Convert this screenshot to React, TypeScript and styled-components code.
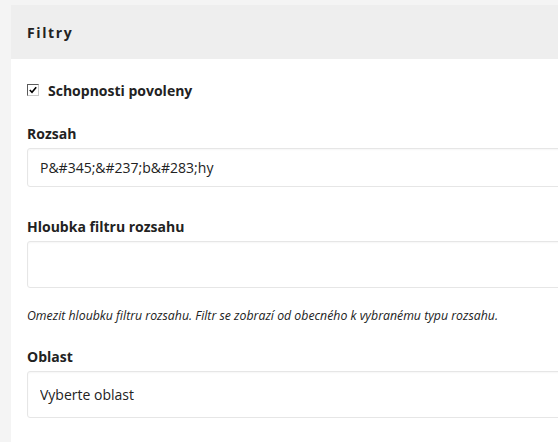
import React from 'react';
import styled, { createGlobalStyle } from 'styled-components';

const GlobalStyle = createGlobalStyle`
  html, body {
    margin: 0;
    padding: 0;
    background: #f4f4f4;
    font-family: 'Open Sans', 'Noto Sans', sans-serif;
    color: #222;
  }
`;

const Page = styled.div`
  width: 558px;
  height: 442px;
  overflow: hidden;
  padding: 5px 0 0 11px;
  box-sizing: border-box;
`;

const Panel = styled.section`
  width: 600px;
  min-height: 460px;
  background: #fff;
`;

const PanelHeader = styled.header`
  height: 54px;
  background: #eeeeee;
  display: flex;
  align-items: center;
  padding: 0 16px;

  h2 {
    margin: 0;
    font-size: 14px;
    font-weight: 700;
    letter-spacing: 1.6px;
    color: #222;
  }
`;

const PanelBody = styled.div`
  padding: 21px 16px 0;
  display: flex;
  flex-direction: column;
`;

const CheckRow = styled.label`
  display: flex;
  align-items: center;
  gap: 9px;
  height: 20px;
  font-size: 14px;
  font-weight: 700;
  margin-bottom: 24px;
`;

const CheckBox = styled.span`
  box-sizing: border-box;
  width: 12px;
  height: 12px;
  border: 1px solid;
  border-color: #5a5a5a #c8c8c8 #c8c8c8 #5a5a5a;
  background: #fff;
  display: flex;
  align-items: center;
  justify-content: center;

  svg {
    display: block;
  }
`;

const Field = styled.div<{ $gap?: number }>`
  display: flex;
  flex-direction: column;
  margin-bottom: ${(p) => p.$gap ?? 30}px;
`;

const Label = styled.label`
  font-size: 14px;
  font-weight: 700;
  line-height: 20px;
  margin-bottom: 4px;
`;

const Input = styled.input<{ $h?: number }>`
  box-sizing: border-box;
  height: ${(p) => p.$h ?? 47}px;
  border: 1px solid #e6e6e6;
  border-radius: 3px;
  box-shadow: inset 0 1px 2px rgba(0, 0, 0, 0.04);
  padding: 0 12px;
  font-family: inherit;
  font-size: 14px;
  color: #222;
  outline: none;
  background: #fff;
`;

const Help = styled.p`
  margin: 20px 0 0;
  font-size: 12.3px;
  font-style: italic;
  line-height: 16px;
  color: #222;
`;

export default function App() {
  return (
    <>
      <GlobalStyle />
      <Page>
        <Panel>
          <PanelHeader>
            <h2>Filtry</h2>
          </PanelHeader>
          <PanelBody>
            <CheckRow>
              <CheckBox>
                <svg width="8" height="8" viewBox="0 0 8 8">
                  <path d="M0.8 4 L3 6.3 L7.2 1.2" fill="none" stroke="#000" strokeWidth="1.6" />
                </svg>
              </CheckBox>
              Schopnosti povoleny
            </CheckRow>
            <Field>
              <Label>Rozsah</Label>
              <Input $h={39} defaultValue={'P&#345;&#237;b&#283;hy'} />
            </Field>
            <Field $gap={23}>
              <Label>Hloubka filtru rozsahu</Label>
              <Input />
              <Help>
                Omezit hloubku filtru rozsahu. Filtr se zobrazí od obecného k vybranému typu rozsahu.
              </Help>
            </Field>
            <Field>
              <Label>Oblast</Label>
              <Input defaultValue="Vyberte oblast" readOnly />
            </Field>
          </PanelBody>
        </Panel>
      </Page>
    </>
  );
}
